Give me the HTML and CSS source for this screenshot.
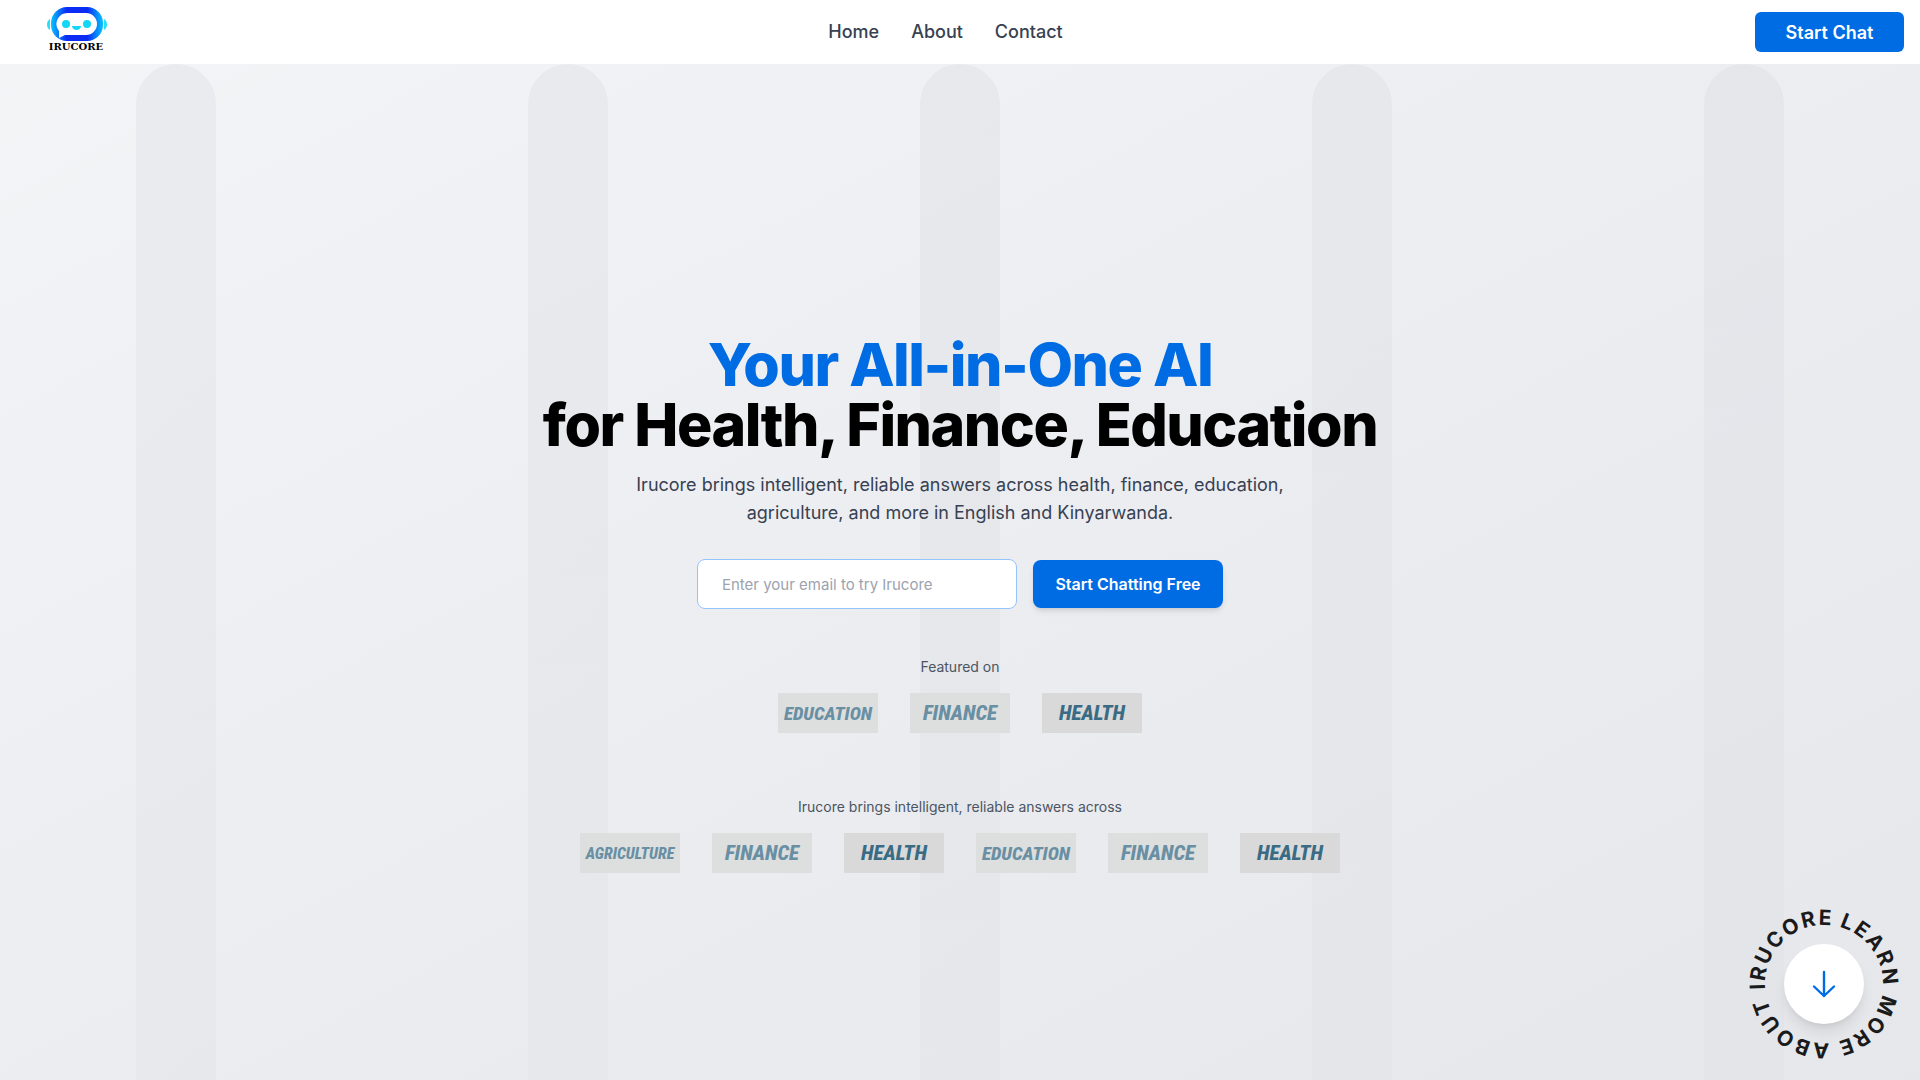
FILE: index.html
```html
<!DOCTYPE html>
<html lang="en">
<head>
<meta charset="utf-8">
<meta name="viewport" content="width=device-width, initial-scale=1">
<title>Irucore</title>
<link rel="stylesheet" href="styles.css">
</head>
<body>
<header class="navbar">
  <a class="logo" href="#" aria-label="Irucore home">
    <svg width="62" height="46" viewBox="0 0 62 46">
      <defs>
        <linearGradient id="shell" x1="0" x2="1" y1="0" y2="0">
          <stop offset="0" stop-color="#08c4ff"/><stop offset=".3" stop-color="#0a2cf5"/>
          <stop offset=".7" stop-color="#0a2cf5"/><stop offset="1" stop-color="#08c4ff"/>
        </linearGradient>
      </defs>
      <path d="M5 12C1 14 1 21 5 23ZM59 12C63 14 63 21 59 23Z" fill="#27e0f5"/>
      <rect x="6" y="0" width="52" height="34" rx="16" fill="url(#shell)"/>
      <path d="M23 6H41A11 11 0 0 1 41 28H20L14 31V24A11 11 0 0 1 23 6Z" fill="#fff"/>
      <circle cx="21" cy="17" r="4" fill="#14d6f5"/><circle cx="42" cy="17" r="4" fill="#14d6f5"/>
      <path d="M27 19H36A4.500 4 0 0 1 27 19Z" fill="#14d6f5"/>
      <text class="logo-word" x="31" y="43" text-anchor="middle">IRUCORE</text>
    </svg>
  </a>
  <nav class="menu">
    <a href="#">Home</a>
    <a href="#">About</a>
    <a href="#">Contact</a>
  </nav>
  <button class="btn btn-nav" type="button">Start Chat</button>
</header>
<main class="hero">
  <div class="pillars" aria-hidden="true"><i></i><i></i><i></i><i></i><i></i></div>
  <div class="content">
    <h1><span>Your All-in-One AI</span><br>for Health, Finance, Education</h1>
    <p class="lead">Irucore brings intelligent, reliable answers across health, finance, education, agriculture, and more in English and Kinyarwanda.</p>
    <form class="signup">
      <input type="email" aria-label="Email" placeholder="Enter your email to try Irucore">
      <button class="btn btn-cta" type="button">Start Chatting Free</button>
    </form>
    <section class="topics">
      <p>Featured on</p>
      <ul>
        <li class="tile tile-medium">EDUCATION</li>
        <li class="tile">FINANCE</li>
        <li class="tile tile-dark">HEALTH</li>
      </ul>
    </section>
    <section class="topics">
      <p>Irucore brings intelligent, reliable answers across</p>
      <ul>
        <li class="tile tile-small">AGRICULTURE</li>
        <li class="tile">FINANCE</li>
        <li class="tile tile-dark">HEALTH</li>
        <li class="tile tile-medium">EDUCATION</li>
        <li class="tile">FINANCE</li>
        <li class="tile tile-dark">HEALTH</li>
      </ul>
    </section>
  </div>
  <a class="learn-more" href="#about">
    <svg class="ring" width="160" height="160" viewBox="0 0 160 160">
      <path id="ring-path" d="M80 80m0-59a59 59 0 1 1 0 118a59 59 0 1 1 0-118" transform="rotate(15 80 80)" fill="none"/>
      <text><textPath href="#ring-path">LEARN MORE ABOUT IRUCORE</textPath></text>
    </svg>
    <span class="disc">
      <svg width="24" height="28" viewBox="0 0 24 28" fill="none" stroke="#006ce4" stroke-width="2.4" stroke-linecap="round" stroke-linejoin="round"><path d="M12 2V26M2 16.500L12 26L22 16.500"/></svg>
    </span>
  </a>
</main>
</body>
</html>
```
FILE: styles.css
```css
* { box-sizing: border-box; margin: 0; padding: 0; }

body {
  min-height: 100vh;
  display: flex;
  flex-direction: column;
  font-family: Inter, sans-serif;
  font-size: 16px;
  line-height: 24px;
  color: #374151;
}

a { color: inherit; text-decoration: none; }

.navbar {
  display: flex;
  align-items: center;
  justify-content: space-between;
  height: 64px;
  padding: 0 16px;
  background: #fff;
}
.logo { display: flex; justify-content: center; width: 120px; padding-bottom: 4px; }
.logo svg { overflow: visible; }
.logo-word { font: 700 10px "DejaVu Serif", serif; fill: #000; }

.menu { display: flex; gap: 32px; font-size: 18px; font-weight: 500; }

.btn {
  border: 0;
  background: #006ce4;
  color: #fff;
  font-family: inherit;
  font-weight: 600;
  white-space: nowrap;
  cursor: pointer;
}
.btn-nav { width: 149px; height: 40px; border-radius: 6px; font-size: 18px; }
.btn-cta {
  width: 190px;
  height: 48px;
  border-radius: 8px;
  font-size: 16px;
  box-shadow: 0 4px 6px -1px rgb(0 0 0 / .1), 0 2px 4px -2px rgb(0 0 0 / .1);
}

.hero {
  position: relative;
  flex: 1;
  display: flex;
  align-items: center;
  justify-content: center;
  overflow: hidden;
  background: linear-gradient(to bottom right, #f3f4f6, #ecedf1 50%, #e5e7eb);
}
.pillars {
  position: absolute;
  inset: 0;
  display: grid;
  grid-template-columns: repeat(5, 1fr);
  gap: 40px;
  justify-items: center;
}
.pillars i {
  width: 80px;
  border-radius: 40px 40px 0 0;
  background: linear-gradient(#d1d5db, #dcdfe1);
  opacity: .28;
}

.content {
  position: relative;
  display: flex;
  flex-direction: column;
  align-items: center;
  text-align: center;
  padding-top: 64px;
}
h1 { font-size: 59px; line-height: 60px; font-weight: 800; letter-spacing: -.025em; color: #000; }
h1 span { color: #006ce4; }
.lead { max-width: 672px; margin-top: 16px; font-size: 18px; line-height: 28px; }

.signup { display: flex; align-items: center; gap: 16px; margin-top: 32px; }
.signup input {
  width: 320px;
  height: 50px;
  padding: 0 24px;
  border: 1px solid #93c5fd;
  border-radius: 8px;
  background: #fff;
  font: 15px/24px Inter, sans-serif;
}
.signup input::placeholder { color: #9ca3af; }

.topics { margin-top: 48px; }
.topics + .topics { margin-top: 64px; }
.topics p { font-size: 14px; line-height: 20px; color: #4b5563; }
.topics ul { display: flex; flex-wrap: wrap; justify-content: center; gap: 32px; margin-top: 16px; list-style: none; }
.tile {
  display: flex;
  align-items: center;
  justify-content: center;
  width: 100px;
  height: 40px;
  background: #dddede;
  color: #688fa3;
  font: italic 800 21px "Roboto Condensed", "Liberation Sans Narrow", "Liberation Sans", sans-serif;
}
.tile-medium { font-size: 19px; }
.tile-small { font-size: 16px; }
.tile-dark { background: #d9d9d9; color: #3a6b85; }

.learn-more {
  position: absolute;
  right: 16px;
  bottom: 16px;
  display: grid;
  place-items: center;
}
.learn-more > * { grid-area: 1 / 1; }
.ring { overflow: visible; font-size: 21px; font-weight: 700; letter-spacing: 2px; fill: #1a1a1a; }
.disc {
  display: flex;
  align-items: center;
  justify-content: center;
  width: 80px;
  height: 80px;
  border-radius: 50%;
  background: #fff;
  box-shadow: 0 10px 15px -3px rgb(0 0 0 / .1), 0 4px 6px -4px rgb(0 0 0 / .1);
}
```
